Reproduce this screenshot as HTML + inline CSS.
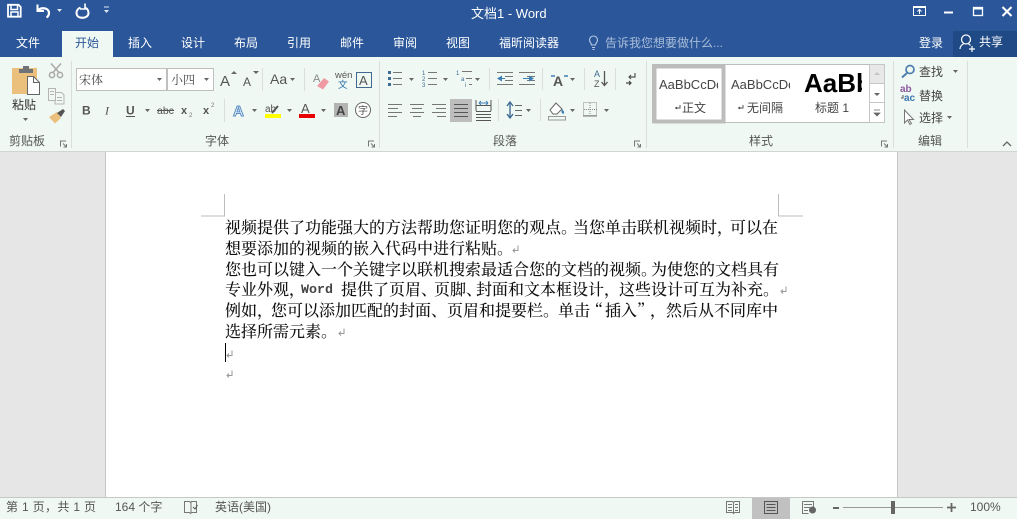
<!DOCTYPE html>
<html lang="zh"><head><meta charset="utf-8"><title>文档1 - Word</title>
<style>
html,body{margin:0;padding:0;width:1017px;height:519px;overflow:hidden;background:#e6e6e6}
svg{position:absolute;left:0;top:0}
text{font-family:"Liberation Sans","Noto Sans CJK SC",sans-serif;font-size:12px}
.d{position:absolute;left:225px;white-space:pre;font-family:"Noto Serif CJK SC",serif;font-size:16px;line-height:21px;height:21px;color:#111;font-weight:500;text-spacing-trim:space-all}
.w{font-family:"Liberation Mono",monospace;font-size:13.33px;color:#444;font-weight:bold}
</style></head><body>
<svg width="1017" height="519" viewBox="0 0 1017 519" xmlns="http://www.w3.org/2000/svg">
<defs>
<clipPath id="c1"><rect x="655" y="70" width="63" height="25"/></clipPath>
<clipPath id="c2"><rect x="726" y="70" width="64" height="25"/></clipPath>
<clipPath id="c3"><rect x="800" y="66" width="62" height="36"/></clipPath>
</defs>
<rect width="1017" height="57" fill="#2b579a"/>
<rect y="57" width="1017" height="95" fill="#f0f8f3"/>
<rect y="151" width="1017" height="1" fill="#d0d4d2"/>
<rect y="152" width="1017" height="345" fill="#e6e6e6"/>
<rect x="106" y="152" width="791" height="345" fill="#fff"/>
<rect x="105" y="152" width="1" height="345" fill="#c6c6c6"/>
<rect x="897" y="152" width="1" height="345" fill="#c6c6c6"/>
<rect y="497" width="1017" height="22" fill="#f0f8f3"/>
<rect y="497" width="1017" height="1" fill="#c4c8c6"/>

<!-- QAT -->
<g fill="none" stroke="#fff">
<path d="M8 4.800h10.500l2.200 2.200v9.700H8z" stroke-width="1.800"/><path d="M11 5v4.500h6.500V5M11 16.500v-4.500h7v4.500" stroke-width="1.500"/>
<path d="M37.500 4.500v6.500h6.500" stroke-width="2"/><path d="M38 10.500c3-3.500 11-3 11 2.500 0 2-1 3.500-2.500 4.500" stroke-width="2.200"/>
<path d="M84 3.500v5.500h-5" stroke-width="1.600" transform="translate(1 0)"/><path d="M80.500 7.500c-2.500 1-4 3-4 5.500 0 3 2.500 4.800 6 4.800s6-2 6-4.800c0-2.500-1.500-4.500-3.500-5.500" stroke-width="2"/>
</g>
<path d="M57 9h5l-2.500 3zM104 10h5l-2.500 3z" fill="#dfe7f2"/><rect x="104" y="6.500" width="5" height="1" fill="#dfe7f2"/>
<text x="471" y="18" fill="#fff" style="font-size:13px">文档1 - Word</text>
<!-- window -->
<g fill="none" stroke="#fff">
<rect x="913.500" y="7.500" width="12" height="8"/><path d="M919.500 14V10M917.500 11.500l2-2 2 2M913 6.500h13" stroke-width="1"/>
<rect x="973.500" y="7.500" width="9" height="8" stroke-width="1.300"/><path d="M973 8.500h10" stroke-width="2"/>
<path d="M1002.500 7l9 9M1011.500 7l-9 9" stroke-width="2"/>
</g>
<rect x="944" y="11.500" width="9" height="2" fill="#fff"/>
<!-- tabs -->
<rect x="62" y="31" width="51" height="27" fill="#f0f8f3"/>
<rect x="953" y="31" width="64" height="26" fill="#1f4a85"/>
<g fill="#fff">
<text x="16" y="47">文件</text>
<text x="128" y="47">插入</text><text x="181" y="47">设计</text><text x="234" y="47">布局</text><text x="287" y="47">引用</text><text x="340" y="47">邮件</text><text x="393" y="47">审阅</text><text x="446" y="47">视图</text><text x="499" y="47">福昕阅读器</text>
<text x="919" y="47">登录</text><text x="979" y="46">共享</text>
</g>
<text x="75" y="47" fill="#2b579a">开始</text>
<text x="605" y="47" fill="#a9bdd9">告诉我您想要做什么...</text>
<g fill="none" stroke="#b8cae2" stroke-width="1.100"><path d="M591.500 45c0-2-2-2.500-2-5a4 4 0 0 1 8 0c0 2.500-2 3-2 5zM592 47.500h3M592.500 49.500h2"/></g>
<g fill="none" stroke="#fff" stroke-width="1.200"><circle cx="966" cy="39.500" r="4.500"/><path d="M960 49c0-3 2-4.500 4-5.500M968 43.500c1 .5 2 1.200 2.500 2M969 49h6M972 46v6"/></g>

<!-- clipboard -->
<rect x="12" y="68" width="25" height="26" fill="#eac07c"/>
<path d="M19 69h4v-3h6v3h4v4H19z" fill="#6f7378"/>
<path d="M27.500 76.500h6l6 6v12h-12z" fill="#fff" stroke="#666"/><path d="M33.500 76.500v6h6" fill="none" stroke="#666"/>
<text x="12" y="109" fill="#333">粘贴</text>
<path d="M23 118h5l-2.500 3z" fill="#666"/>
<g fill="none" stroke="#a9a9a9" stroke-width="1.500"><circle cx="52" cy="75" r="2.600"/><circle cx="60" cy="75" r="2.600"/><path d="M53 72.500l8-9M59 72.500l-8-9"/></g>
<g fill="none" stroke="#b4b4b4"><path d="M48.500 88.500h7v12h-7zM55.500 92.500h6l2.500 2.500v9h-9v-4"/><path d="M50 91.500h4M50 94.500h4M57 97.500h5M57 100.500h5"/></g>
<path d="M49 117l8-5 4 6-6 5.500z" fill="#eac07c"/><path d="M57 113l6-4 2 2-4 6z" fill="#555"/>
<rect x="71" y="61" width="1" height="87" fill="#dadfdc"/>
<text x="9" y="145" fill="#555">剪贴板</text>
<g fill="none" stroke="#777"><path d="M60.500 146.500v-5.500h5.500"/><path d="M63 143.500l3.500 3.500M66.500 144v3h-3"/></g>

<!-- font -->
<rect x="76.500" y="68.500" width="90" height="22" fill="#fff" stroke="#bfbfbf"/>
<rect x="167.500" y="68.500" width="46" height="22" fill="#fff" stroke="#bfbfbf"/>
<text x="79" y="84" fill="#444" style="font-family:'Noto Serif CJK SC',serif">宋体</text>
<text x="171" y="84" fill="#444" style="font-family:'Noto Serif CJK SC',serif">小四</text>
<g fill="#666">
<path d="M157 78h5l-2.500 3zM204 78h5l-2.500 3zM290 78h5l-2.500 3zM145 109h5l-2.500 3zM252 109h5l-2.500 3zM287 109h5l-2.500 3zM321 109h5l-2.500 3zM409 78h5l-2.500 3zM443 78h5l-2.500 3zM475 78h5l-2.500 3zM570 78h5l-2.500 3zM526 109h5l-2.500 3zM570 109h5l-2.500 3zM604 109h5l-2.500 3zM953 70h5l-2.500 3zM947 116h5l-2.500 3z"/>
<path d="M231 74h6l-3-3zM253 71h6l-3 3z"/>
</g>
<text x="220" y="86" fill="#555" style="font-size:15px">A</text>
<text x="243" y="86" fill="#555" style="font-size:12px">A</text>
<rect x="262" y="68" width="1" height="23" fill="#dadfdc"/>
<text x="270" y="84" fill="#555" style="font-size:14px">Aa</text>
<rect x="304" y="68" width="1" height="23" fill="#dadfdc"/>
<text x="313" y="82" fill="#888" style="font-size:11px">A</text>
<path d="M317 86l7-8 5 3.500-6 8z" fill="#ef9aa3"/>
<text x="335" y="78" fill="#555" style="font-size:9.500px">wén</text>
<text x="338" y="88" fill="#2a6ea8" style="font-size:9.500px">文</text>
<rect x="356.500" y="72.500" width="15" height="15" fill="none" stroke="#41688f"/>
<text x="359" y="85" fill="#555" style="font-size:13px">A</text>
<text x="82" y="114.500" fill="#555" style="font-size:12px;font-weight:bold">B</text>
<text x="105" y="114.500" fill="#555" style="font-size:12px;font-style:italic;font-family:'Liberation Serif',serif">I</text>
<text x="126" y="114.500" fill="#555" style="font-size:12px;font-weight:bold">U</text>
<rect x="126" y="116" width="9" height="1" fill="#555"/>
<text x="157" y="114" fill="#555" style="font-size:10.500px">abc</text><rect x="157" y="110" width="17" height="1" fill="#555"/>
<text x="181" y="114" fill="#555" style="font-size:11px;font-weight:bold">x</text><text x="189" y="117" fill="#777" style="font-size:6px">2</text>
<text x="203" y="114" fill="#555" style="font-size:11px;font-weight:bold">x</text><text x="211" y="107" fill="#777" style="font-size:6px">2</text>
<rect x="224" y="99" width="1" height="23" fill="#dadfdc"/>
<text x="233" y="116" fill="#e8f1fa" stroke="#5b8ec4" stroke-width="1" style="font-size:15px;font-weight:bold">A</text>
<text x="265" y="112" fill="#555" style="font-size:10px">ab</text><path d="M272 113l6-7" stroke="#555" stroke-width="2"/>
<rect x="265" y="114" width="16" height="4" fill="#ffff00"/>
<text x="301" y="113" fill="#555" style="font-size:13px">A</text><rect x="299" y="114" width="16" height="4" fill="#e60000"/>
<rect x="334" y="103" width="14" height="14" fill="#b3b3b3"/><text x="336" y="115" fill="#444" style="font-size:13px;font-weight:bold">A</text>
<circle cx="363" cy="110" r="7.500" fill="#fff" stroke="#666"/><text x="358" y="114" fill="#555" style="font-size:10px">字</text>
<text x="205" y="145" fill="#555">字体</text>
<rect x="379" y="61" width="1" height="87" fill="#dadfdc"/>
<g fill="none" stroke="#777"><path d="M368.500 146.500v-5.500h5.500"/><path d="M371 143.500l3.500 3.500M374.500 144v3h-3"/></g>

<!-- paragraph -->
<g fill="#3f6c95"><rect x="388" y="71" width="3" height="3"/><rect x="388" y="77" width="3" height="3"/><rect x="388" y="83" width="3" height="3"/></g>
<g stroke="#777" fill="none">
<path d="M393 72.500h9M393 78.500h9M393 84.500h9M428 72.500h9M428 78.500h9M428 84.500h9M462 71.500h10M466 78.500h6M469 84.500h3"/>
<path d="M388 104.500h14M388 108.500h10M388 112.500h14M388 116.500h9"/>
<path d="M410 104.500h14M412 108.500h10M410 112.500h14M413 116.500h8"/>
<path d="M432 104.500h14M436 108.500h10M432 112.500h14M437 116.500h9"/>
<path d="M497 72.500h16M505 76.500h8M505 80.500h8M497 84.500h16M519 72.500h16M527 76.500h8M527 80.500h8M519 84.500h16"/>
</g>
<text x="422" y="75" fill="#3f6c95" style="font-size:6px">1</text><text x="422" y="81" fill="#3f6c95" style="font-size:6px">2</text><text x="422" y="87" fill="#3f6c95" style="font-size:6px">3</text>
<text x="456" y="75" fill="#3f6c95" style="font-size:6px">1</text><text x="461" y="81" fill="#3f6c95" style="font-size:6px">a</text><text x="465" y="87" fill="#3f6c95" style="font-size:6px">i</text>
<path d="M497 78.500l5-3v6zM534 78.500l-5-3v6z" fill="#3f7fb5"/><path d="M501 78.500h4M523 78.500h6" stroke="#3f7fb5"/>
<rect x="489" y="68" width="1" height="22" fill="#dadfdc"/><rect x="542" y="68" width="1" height="22" fill="#dadfdc"/><rect x="584" y="68" width="1" height="22" fill="#dadfdc"/><rect x="615" y="68" width="1" height="22" fill="#dadfdc"/>
<text x="553" y="86" fill="#555" style="font-size:14px;font-weight:bold">A</text>
<path d="M551 76h4M564 76h4" stroke="#3f7fb5" stroke-width="1.500"/>
<text x="594" y="77" fill="#3f6c95" style="font-size:9px">A</text><text x="594" y="87" fill="#555" style="font-size:9px">Z</text>
<path d="M604.500 71v14M601.500 82l3 3.500 3-3.500" fill="none" stroke="#555" stroke-width="1.300"/>
<path d="M635 73v4h-6M631 75l-2 2 2 2" fill="none" stroke="#555" stroke-width="1.200"/><path d="M626 83h5M629 81l2 2-2 2" fill="none" stroke="#444" stroke-width="1.200"/>
<rect x="450" y="99" width="22" height="23" fill="#bdbdbd"/>
<path d="M454 104.500h14M454 108.500h14M454 112.500h14M454 116.500h14" stroke="#555"/>
<path d="M476 105.500h15M476 111.500h15M476 114.500h15M476 117.500h15M476 120.500h15M476 100v11M491 100v11" stroke="#555" fill="none"/>
<path d="M479 103h9M479 103l2-2M479 103l2 2M488 103l-2-2M488 103l-2 2" stroke="#3f7fb5" fill="none"/>
<rect x="498" y="99" width="1" height="22" fill="#dadfdc"/><rect x="540" y="99" width="1" height="22" fill="#dadfdc"/>
<path d="M510 103v14" stroke="#3f6c95" stroke-width="1.400"/><path d="M507 106l3-4 3 4M507 114l3 4 3-4" fill="none" stroke="#3f6c95" stroke-width="1.400"/>
<path d="M515 105.500h7M515 110.500h7M515 115.500h7" stroke="#666"/>
<path d="M550 110l6-7 6 6-5 5h-4z" fill="#fff" stroke="#666"/><path d="M562 109c2 2 3 4 1 5-1.500-1-2-3-1-5z" fill="#3f7fb5"/><rect x="548.500" y="116.500" width="17" height="3.500" fill="#f0f8f3" stroke="#999"/>
<rect x="583.500" y="102.500" width="13" height="13" fill="none" stroke="#888" stroke-dasharray="1 1"/><path d="M590 103v13M584 109.500h13" stroke="#888" stroke-dasharray="1 1"/>
<rect x="583" y="115.500" width="14" height="1" fill="#777"/>
<text x="493" y="145" fill="#555">段落</text>
<g fill="none" stroke="#777"><path d="M634.500 146.500v-5.500h5.500"/><path d="M637 143.500l3.500 3.500M640.500 144v3h-3"/></g>
<rect x="646" y="61" width="1" height="87" fill="#dadfdc"/>

<!-- styles -->
<rect x="652.500" y="64.500" width="232" height="58" fill="#fff" stroke="#bdbdbd"/>
<rect x="654.500" y="66.500" width="69" height="55" fill="#fff" stroke="#bcbcbc" stroke-width="4"/>
<text x="659" y="89" fill="#444" style="font-size:13px" clip-path="url(#c1)">AaBbCcDd</text>
<text x="731" y="89" fill="#444" style="font-size:13px" clip-path="url(#c2)">AaBbCcDd</text>
<text x="804" y="92" fill="#000" style="font-size:26px;font-weight:bold" clip-path="url(#c3)">AaBbC</text>
<rect x="869.500" y="64.500" width="15" height="19" fill="#e8e8e8" stroke="#c6c6c6"/>
<rect x="869.500" y="83.500" width="15" height="19" fill="#fff" stroke="#c6c6c6"/>
<rect x="869.500" y="102.500" width="15" height="20" fill="#fff" stroke="#c6c6c6"/>
<path d="M874 75l3-3 3 3z" fill="#c4c4c4"/><path d="M874 93h6l-3 3z" fill="#666"/><path d="M874 110h6M874 113h6l-3 3z" fill="#666" stroke="#666" stroke-width=".7"/>
<path d="M680 105v3h-4M677 107l-1.500 1 1.500 1M743 105v3h-4M740 107l-1.500 1 1.500 1" fill="none" stroke="#555"/>
<text x="682" y="112" fill="#444">正文</text>
<text x="747" y="112" fill="#444">无间隔</text>
<text x="815" y="112" fill="#444">标题 1</text>
<text x="749" y="145" fill="#555">样式</text>
<g fill="none" stroke="#777"><path d="M881.500 146.500v-5.500h5.500"/><path d="M884 143.500l3.500 3.500M887.500 144v3h-3"/></g>
<rect x="893" y="61" width="1" height="87" fill="#dadfdc"/>

<!-- editing -->
<circle cx="910" cy="69.500" r="4" fill="none" stroke="#4a7fb0" stroke-width="1.700"/><path d="M907 73l-5 4.500" stroke="#4a7fb0" stroke-width="2"/>
<text x="919" y="76" fill="#444">查找</text>
<text x="900" y="92" fill="#8a5a9e" style="font-size:10px;font-weight:bold">ab</text>
<text x="904" y="101" fill="#3a78b0" style="font-size:10px;font-weight:bold">ac</text>
<path d="M903 95v3h-2" stroke="#555" fill="none"/>
<text x="919" y="100" fill="#444">替换</text>
<path d="M904.500 110v13l3-3 2.500 4.500 1.500-1-2.500-4h4.500z" fill="#fff" stroke="#777"/>
<text x="919" y="122" fill="#444">选择</text>
<text x="918" y="145" fill="#555">编辑</text>
<rect x="967" y="61" width="1" height="87" fill="#dadfdc"/>
<path d="M1003 146l4-4 4 4" fill="none" stroke="#666" stroke-width="1.300"/>

<!-- page corners -->
<path d="M224.500 194v22H201M778.500 194v22H803" fill="none" stroke="#bdbdbd"/>
<!-- paragraph marks -->
<g fill="none" stroke="#999" stroke-width="1">
<path d="M518 245.500v5h-5M515 248.500l-2 2 2 2"/>
<path d="M786 286.500v5h-5M783 289.500l-2 2 2 2"/>
<path d="M344 328.500v5h-5M341 331.500l-2 2 2 2"/>
<path d="M232 350.500v5h-5M229 353.500l-2 2 2 2"/>
<path d="M232 370.500v5h-5M229 373.500l-2 2 2 2"/>
</g>
<rect x="225" y="343" width="1" height="19" fill="#000"/>

<!-- status -->
<rect x="752" y="498" width="38" height="21" fill="#c1c1c1"/>
<text x="6" y="511" fill="#555" textLength="90">第 1 页，共 1 页</text>
<text x="115" y="511" fill="#555">164 个字</text>
<text x="215" y="511" fill="#555">英语(美国)</text>
<text x="970" y="511" fill="#555">100%</text>
<g fill="none" stroke="#777">
<path d="M184.500 501.500h5l1 1 1-1h5v11h-5l-1 1-1-1h-5zM191 502v11"/>
<path d="M193 507l2 2 2.500-4" stroke="#555"/>
<path d="M726.500 501.500h6l1 1 1-1h5v11h-5l-1 1-1-1h-6zM733.500 502v11M728 504.500h4M728 507.500h4M728 510.500h4M735 504.500h3M735 507.500h3M735 510.500h3"/>
<path d="M764.500 501.500h13v12h-13zM766.500 504.500h9M766.500 507.500h9M766.500 510.500h9" stroke="#555"/>
<path d="M802.500 501.500h11v6M802.500 501.500v12h6M804 504.500h8M804 507.500h6M804 510.500h4"/>
</g>
<circle cx="812.500" cy="510" r="3.500" fill="#666"/>
<rect x="833" y="507" width="6" height="2" fill="#666"/>
<rect x="843" y="507" width="100" height="1" fill="#999"/>
<rect x="891" y="501" width="4" height="13" fill="#666"/>
<path d="M947 507.500h9M951.500 503v9" stroke="#666" stroke-width="1.800"/>
</svg>
<div class="d" style="top:216px">视频提供了功能强大的方法帮助您证明您的观点。</div>
<div class="d" style="top:216px;left:573px">当您单击联机视频时，</div>
<div class="d" style="top:216px;left:730px">可以在</div>
<div class="d" style="top:237px">想要添加的视频的嵌入代码中进行粘贴。</div>
<div class="d" style="top:258px">您也可以键入一个关键字以联机搜索最适合您的文档的视频。</div>
<div class="d" style="top:258px;left:651px">为使您的文档具有</div>
<div class="d" style="top:278px">专业外观，</div>
<div class="d w" style="top:280px;left:301px">Word</div>
<div class="d" style="top:278px;left:341px">提供了页眉、</div>
<div class="d" style="top:278px;left:434px">页脚、</div>
<div class="d" style="top:278px;left:476px">封面和文本框设计，</div>
<div class="d" style="top:278px;left:619px">这些设计可互为补充。</div>
<div class="d" style="top:299px">例如，</div>
<div class="d" style="top:299px;left:271px">您可以添加匹配的封面、</div>
<div class="d" style="top:299px;left:447px">页眉和提要栏。</div>
<div class="d" style="top:299px;left:558px">单击</div>
<div class="d" style="top:299px;left:587px">“</div>
<div class="d" style="top:299px;left:605px">插入</div>
<div class="d" style="top:299px;left:637px">”</div>
<div class="d" style="top:299px;left:650px">，</div>
<div class="d" style="top:299px;left:666px">然后从不同库中</div>
<div class="d" style="top:320px">选择所需元素。</div>
</body></html>
